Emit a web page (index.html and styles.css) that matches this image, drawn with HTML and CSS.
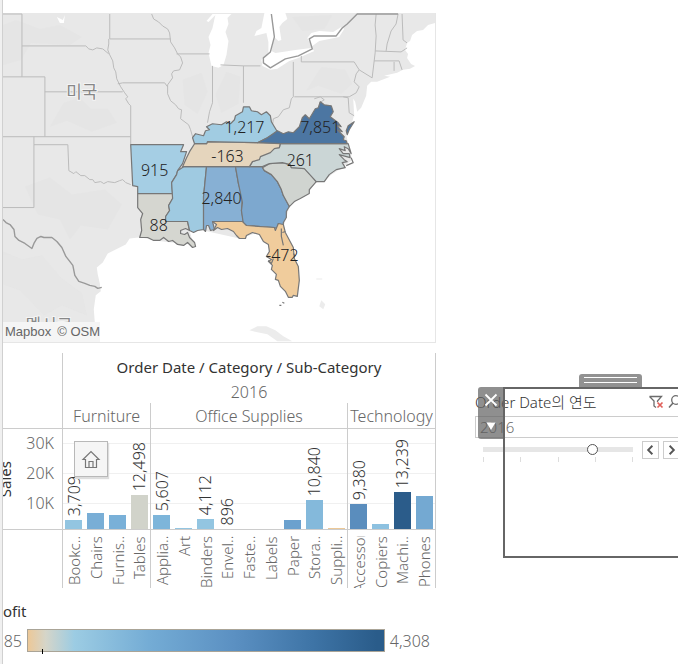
FILE: index.html
```html
<!DOCTYPE html>
<html lang="ko">
<head>
<meta charset="utf-8">
<title>Order Date / Category / Sub-Category</title>
<meta name="viewport" content="width=device-width, initial-scale=1">
<link rel="stylesheet" href="styles.css">
</head>
<body>
<div class="dashboard">
<main class="sheets">
  <figure class="map">
    <svg class="map-canvas" viewBox="3 13 433 330" preserveAspectRatio="xMinYMin slice" role="img" aria-label="Profit">
      <rect class="water" x="3" y="13" width="433" height="330"/>
      <path class="land" d="M3 13H436V23L429 25L424 30L418 31L413 35L411 41L408 43L406 50L409 54L408 58L412 64L416 66L411 69L404 70L398 73L385 76L391 77L378 82L372 82L368 86L367 96L362 108L358 112L356 102L354 99L355 115L352 126L347 135L349 144L352 153L352 161L343 168L332 175L325 182L317 182L310 192L295 203L290 207L285 225L240 239L204 231L190 231L193 242L172 243L155 241L142 238L139 238L130 239L126 245L118 249L108 254L103 263L97 268L98 275L100 284L101 292L96 296L94 310L95 323V341H3Z"/>
      <g class="relief">
        <path d="M3 25L16 20L40 29L60 25L82 37L70 45L31 43L21 60L3 65Z"/>
        <path d="M64 103L80 98L91 109L108 109L117 123L92 132L67 121L50 127Z"/>
        <path d="M25 187L50 178L72 195L105 190L122 205L108 230L81 226L70 240L60 220L38 215Z"/>
        <path d="M3 252L22 260L42 256L61 278L82 294L87 316L62 306L44 316L20 291L3 285Z"/>
        <path d="M183 80L202 73L208 92L198 114L185 105Z"/>
        <path d="M227 72L241 77L239 104L222 113L216 95Z"/>
        <path d="M322 67L346 70L353 84L342 94L319 86L307 91Z"/>
        <path d="M293 17L333 15L325 29L303 31Z"/>
      </g>
      <g class="water">
        <path d="M216 14H232L228 18L229 24L226 32L229 41L227 55L224 65L219 68L212 66L209 53L211 45L209 37L213 28Z"/>
        <path d="M207 21L213 14L217 14L209 22Z"/>
        <path d="M265 13H286L288 19L283 23L280 27L282 40L279 41L275 37L272 51L276 53L283 52L296 50L312 48L315 51L299 58L290 61L278 69L271 70L263 66L262 60L269 53L269 42L267 33L259 35L255 36L257 31L262 28Z"/>
        <path d="M308 38L312 33L320 31L334 32L342 27L345 29L340 37L320 41L313 46L310 42Z"/>
        <path d="M57 17L63 20L65 15L64 23L60 23Z"/>
      </g>
      <g class="state-lines">
        <path d="M3 14H22V77M3 77H45V137M22 46H86L89 49L93 50L97 48L103 49L109 54M110 14V39H171M109 39V44L108 50L110 55L113 61L114 68L116 72L117 79L121 87L125 93L128 97L126 99L129 104L131 106V145M118 84L123 83H165L168 87M45 92H123M3 137H131M34 137V145H68L69 171L74 174L76 172L81 176L85 176L90 180L93 180L95 183L101 182L104 184L108 182L115 183L120 181L123 180L126 183L131 185M34 145V208H3M152 14L154 19L159 22L163 26L168 29L170 33L171 42L175 48L178 54L181 57L183 63L180 70L174 71L172 74L173 78L168 85L168 94L171 101L176 105L179 109L182 110L181 119L189 125L191 130L193 137L198 142M177 54H210M213 66V103L210 112L208 123M221 65L244 66H261M244 66V103M294 62V97L292 99L290 108L284 110L279 117L274 119L273 126M302 56V62H355L360 70L357 74L355 82L360 87L357 93L350 97H295M315 99L321 97L325 100L320 103M344 97L349 98L350 113L355 116M360 70L373 78L376 53L377 36L376 25L377 14M376 51L402 52L408 48M375 61H400L403 70M395 62V71M399 14L397 24L392 31L388 44L387 51M403 14L404 40L408 43"/>
      </g>
      <path class="country-line" d="M3 220L6 223L10 225L14 230L15 237L19 241L25 244L32 249L34 244L37 239L41 237L44 238L52 238L57 242L62 248L66 257L73 266L75 276L79 282L85 284L90 286L95 287L98 289L102 288"/>
      <path class="country-line" d="M272 14L275 37L271 52L264 58V63L271 68L286 59L299 56L313 49L310 39L315 36H337L343 28L348 24L358 14H399"/>
      <path class="islands" d="M250 331L258 327L267 327L276 331L284 337L293 342H278L268 335L258 333ZM322 301L326 305L324 310L320 307ZM317 279H323V280H317Z"/>
      <g class="states">
        <path fill="#a5cee4" d="M131 145H184L181 152H187L185 158L183 164L178 171L177 175L172 183L173 194H138V187L133 186Z"/>
        <path fill="#d5d6d0" d="M138 194H173V199L169 206L170 211L166 217V222H188L190 231L186 229L181 231L181 234L185 235L188 233L190 238L195 243L196 247L193 248L188 243L184 246L178 245L173 241L169 242L164 238L160 241L154 241L148 238H140L142 231L141 220L143 214L138 208Z"/>
        <path fill="#9fcae1" d="M184 167H207L204 197L204 230L198 231L194 233L190 231L188 222H166V217L170 211L169 206L173 199L172 183L177 175L178 171Z"/>
        <path fill="#87b0d4" d="M207 167H236L239 184L243 198L242 211L244 222H213L215 230L211 231L209 226L207 226L206 232L204 230V197Z"/>
        <path fill="#7da8cf" d="M236 167H263L265 171L272 175L278 182L282 190L284 196L290 207L287 212L287 218L284 223V226L279 224L278 229L275 228L247 226L244 225L242 211L243 203L239 184Z"/>
        <path fill="#f0cc9c" d="M213 222H243L247 226L275 228L276 231L279 224L284 225L286 233L294 248L295 259L299 267L300 281L298 297L294 296L293 298H289L286 292L281 287L279 281L276 280L277 275L272 270L273 266L269 262L272 260L267 257L270 252L269 245L264 242L260 235L253 233L247 236L246 239H240L237 236L234 232L228 229L222 230L218 228L214 231L217 225Z"/>
        <path fill="#d0d4d0" d="M263 168L270 164L283 163L291 165L292 168H305L317 182L310 190L310 194L301 199L295 202L290 207L284 196L282 190L278 182L272 175L265 171Z"/>
        <path fill="#cbd6d6" d="M281 144H349L352 154L349 149L345 147L346 151L340 149L344 154H350L351 158L340 155L345 160L348 162L343 163L346 168L337 170L330 175L325 182L317 182L305 169L292 168L291 165L283 163L270 164L263 167H250L253 162L260 159L261 156L271 152L275 148H280Z"/>
        <path fill="#e5d5bd" d="M195 144H207L208 142L258 143H281L280 148L275 149L271 153L261 157L260 160L253 162L250 167H183L187 158L190 152Z"/>
        <path fill="#a1cce2" d="M195 144L193 138L196 134L204 136L206 131L210 130L207 127L213 124L222 125L227 122L231 124L235 120L236 116L243 112L244 107L250 107L252 111L258 112L262 115L267 112L271 116L272 122L278 132L268 138L258 143L208 142L207 144Z"/>
        <path fill="#4c76a2" d="M258 143L268 138L278 131L284 134L289 132L294 133L300 127L303 118L306 115L310 119L316 109L319 108L321 102L325 105L332 106L334 112L331 117L339 123L342 127L337 125L343 132L338 130L345 137L344 140L347 141L348 144H281Z"/>
        <path fill="#4c76a2" d="M349 126L355 122L350 130L348 135L347 131Z"/>
        <path class="shore" d="M282 229V237L284 246M283 233L286 232M294 254L296 257M269 261L272 264L274 259M352 158L354 163L347 166M280 306H282M283 303L285 304"/>
      </g>
      <g class="place-names">
        <text x="82" y="98">미국</text>
        <text x="49" y="332">멕시코</text>
      </g>
      <g class="marks">
        <text x="245" y="133">1,217</text>
        <text x="321" y="133">7,851</text>
        <text x="228" y="162">-163</text>
        <text x="301" y="166">261</text>
        <text x="155" y="176">915</text>
        <text x="222" y="204">2,840</text>
        <text x="159" y="232">88</text>
        <text x="283" y="262">-472</text>
      </g>
    </svg>
    <figcaption class="attribution"><span>Mapbox</span><span>© OSM</span></figcaption>
  </figure>

  <section class="chart">
    <div class="axis">
      <div class="axis-head"></div>
      <div class="axis-body">
        <span class="axis-title">Sales</span>
        <div class="axis-ticks"><span>30K</span><span>20K</span><span>10K</span></div>
      </div>
    </div>
    <div class="panes">
      <h2 class="chart-title">Order Date / Category / Sub-Category</h2>
      <div class="year">2016</div>
      <div class="groups">
        <section class="group four">
          <h3>Furniture</h3>
          <div class="plot">
            <div class="column"><span class="value">3,709</span><i class="bar" style="height:9px;background:#93c5e1"></i></div>
            <div class="column"><i class="bar" style="height:16px;background:#79aed6"></i></div>
            <div class="column"><i class="bar" style="height:14px;background:#79b0d8"></i></div>
            <div class="column"><span class="value">12,498</span><i class="bar" style="height:34px;background:#d1d3ca"></i></div>
          </div>
          <div class="labels"><span>Bookc..</span><span>Chairs</span><span>Furnis..</span><span>Tables</span></div>
        </section>
        <section class="group nine">
          <h3>Office Supplies</h3>
          <div class="plot">
            <div class="column"><span class="value">5,607</span><i class="bar" style="height:14px;background:#7db5da"></i></div>
            <div class="column"><i class="bar" style="height:1px;background:#93c5e1"></i></div>
            <div class="column"><span class="value">4,112</span><i class="bar" style="height:10px;background:#93c5e1"></i></div>
            <div class="column"><span class="value">896</span></div>
            <div class="column"></div>
            <div class="column"></div>
            <div class="column"><i class="bar" style="height:9px;background:#6ba1ce"></i></div>
            <div class="column"><span class="value">10,840</span><i class="bar" style="height:29px;background:#84b9db"></i></div>
            <div class="column"><i class="bar" style="height:1px;background:#ecc897"></i></div>
          </div>
          <div class="labels"><span>Applia..</span><span>Art</span><span>Binders</span><span>Envel..</span><span>Faste..</span><span>Labels</span><span>Paper</span><span>Stora..</span><span>Suppli..</span></div>
        </section>
        <section class="group four">
          <h3>Technology</h3>
          <div class="plot">
            <div class="column"><span class="value">9,380</span><i class="bar" style="height:25px;background:#5a8dbd"></i></div>
            <div class="column"><i class="bar" style="height:5px;background:#8dc1e0"></i></div>
            <div class="column"><span class="value">13,239</span><i class="bar" style="height:37px;background:#2b5c8a"></i></div>
            <div class="column"><i class="bar" style="height:33px;background:#74a9d2"></i></div>
          </div>
          <div class="labels"><span class="middle">Accessor</span><span>Copiers</span><span>Machi..</span><span>Phones</span></div>
        </section>
      </div>
    </div>
    <button class="home" type="button" aria-label="Home">
      <svg viewBox="0 0 20 20" width="20" height="20"><path d="M2 10.500L10 2.500L18 10.500H15.500V18.500H4.500V10.500Z"/><path d="M8 18.500V12.500H12V18.500"/></svg>
    </button>
  </section>

  <section class="legend">
    <h2>ofit</h2>
    <div class="legend-row"><span class="low">185</span><div class="ramp"></div><span class="high">4,308</span></div>
  </section>
</main>

<aside class="filter">
  <div class="filter-head">
    <h2 id="year-title">Order Date의 연도</h2>
    <button class="tool" type="button" aria-label="Clear filter"><svg viewBox="0 0 16 16" width="16" height="16"><path d="M1.500 2.500H13.500L9.500 7V8M1.500 2.500L6 7V12L8 13.500" fill="none" stroke="#6b6b6b" stroke-width="1.300"/><path d="M9.500 8.500L14.500 13.500M14.500 8.500L9.500 13.500" stroke="#e0605a" stroke-width="1.700"/></svg></button>
    <button class="tool" type="button" aria-label="Search"><svg viewBox="0 0 16 16" width="16" height="16"><circle cx="8" cy="6" r="4.300" fill="none" stroke="#6b6b6b" stroke-width="1.300"/><path d="M5 9L1 13.500" stroke="#6b6b6b" stroke-width="1.500"/></svg></button>
  </div>
  <input class="year-box" type="text" value="2016" aria-labelledby="year-title">
  <div class="stepper">
    <div class="slider">
      <input type="range" min="0" max="4" value="3" aria-labelledby="year-title">
      <div class="slider-ticks"><i></i><i></i><i></i><i></i><i></i></div>
    </div>
    <button class="step" type="button" aria-label="Previous"><svg viewBox="0 0 16 16" width="16" height="16"><path d="M10 3.500L5.500 8L10 12.500"/></svg></button>
    <button class="step" type="button" aria-label="Next"><svg viewBox="0 0 16 16" width="16" height="16"><path d="M6 3.500L10.500 8L6 12.500"/></svg></button>
  </div>
  <div class="selection"></div>
  <div class="grip"></div>
  <div class="object-tools">
    <button type="button" aria-label="Remove"><svg viewBox="0 0 16 16" width="16" height="16"><path d="M2.500 2.500L13.500 13.500M13.500 2.500L2.500 13.500" stroke="#fff" stroke-width="1.800"/></svg></button>
    <button type="button" aria-label="More options"><svg viewBox="0 0 16 16" width="16" height="16"><path d="M3.500 4.500H12.500L8 12Z" fill="#fff"/></svg></button>
  </div>
</aside>
</div>
</body>
</html>
```
FILE: styles.css
```css
* { box-sizing: border-box; }

body {
  margin: 0;
  overflow: hidden;
  background: #fff;
  color: #666;
  font: 300 16px/20px "Noto Sans", "Noto Sans CJK KR", sans-serif;
}

h2, h3, figure { margin: 0; font: inherit; }
button { padding: 0; font: inherit; }
svg { display: block; }

.dashboard {
  display: grid;
  grid-template-columns: minmax(0, 434fr) minmax(0, 242fr);
  min-height: 100vh;
  border-left: 2px solid #f0f0f0;
}

.sheets {
  overflow: hidden;
  padding-top: 13px;
  border-left: 1px solid #d0d0d0;
}

/* Map */
.map {
  position: relative;
  border: solid #e6e6e6;
  border-width: 0 1px 1px 0;
}
.map-canvas { width: 100%; height: auto; }
.water { fill: #fff; }
.land { fill: #e8e8e8; }
.relief { fill: #e4e4e4; opacity: .5; }
.islands { fill: #ececec; }
.state-lines { fill: none; stroke: #bbb; stroke-width: 1; }
.country-line { fill: none; stroke: #999; stroke-width: 1.4; stroke-linejoin: round; }
.states { stroke: #777; stroke-width: 1.2; stroke-linejoin: round; }
.states .shore { fill: none; }
.marks { fill: #222; font-size: 16px; text-anchor: middle; }
.place-names {
  fill: #888;
  stroke: #f4f4f4;
  stroke-width: 2px;
  paint-order: stroke;
  font: 400 17px "Noto Sans CJK KR", sans-serif;
  text-anchor: middle;
}
.attribution {
  position: absolute;
  left: 0;
  bottom: 0;
  display: flex;
  gap: 6px;
  padding: 0 0 0 2px;
  background: #f5f5f5;
  font: 400 13px/20px "Liberation Sans", sans-serif;
}

/* Bar chart */
.chart {
  position: relative;
  display: grid;
  grid-template-columns: 59px minmax(0, 1fr);
  height: 235px;
  margin-top: 10px;
}
.axis-head { height: 76px; border-bottom: 1px solid #ccc; }
.axis-body {
  display: flex;
  align-items: center;
  justify-content: space-between;
  height: 101px;
  padding-right: 8px;
  border-bottom: 1px solid #ccc;
}
.axis-title {
  margin-left: -8px;
  writing-mode: vertical-rl;
  transform: rotate(180deg);
  color: #333;
  font-size: 15px;
  font-weight: 400;
}
.axis-ticks {
  display: grid;
  gap: 10px;
  align-self: start;
  padding-top: 4px;
}
.panes { border: solid #ccc; border-width: 0 1px; }
.chart-title {
  padding-top: 4px;
  color: #333;
  font-size: 15px;
  font-weight: 400;
  text-align: center;
  white-space: nowrap;
}
.year { padding: 5px 0 1px; text-align: center; }
.groups { display: flex; }
.group { min-width: 0; border-left: 1px solid #ccc; }
.group:first-child { border-left: 0; }
.four { flex: 4 1 0; }
.nine { flex: 9 1 0; }
.group h3 {
  height: 26px;
  padding-top: 3px;
  border-bottom: 1px solid #ccc;
  text-align: center;
}
.plot {
  display: flex;
  height: 101px;
  border-bottom: 1px solid #ccc;
  background: repeating-linear-gradient(#fff 0 29px, #f0f0f0 29px 30px) 0 -15px;
}
.column {
  display: flex;
  flex: 1 1 0;
  flex-direction: column;
  align-items: center;
  justify-content: flex-end;
  min-width: 0;
}
.bar { width: 78%; }
.value {
  padding-top: 4px;
  writing-mode: vertical-rl;
  transform: rotate(180deg);
  color: #333;
}
.labels {
  display: flex;
  height: 58px;
  padding-top: 6px;
  overflow: hidden;
  font-size: 15px;
}
.labels span {
  display: flex;
  flex: 1 1 0;
  align-items: center;
  justify-content: flex-end;
  min-width: 0;
  overflow: hidden;
  writing-mode: vertical-rl;
  transform: rotate(180deg);
  white-space: nowrap;
}
.labels .middle { justify-content: center; }
.home {
  position: absolute;
  top: 88px;
  left: 71px;
  display: grid;
  place-items: center;
  width: 34px;
  height: 36px;
  border: 1px solid #b8b8b8;
  background: #f5f5f5;
  box-shadow: 1px 2px 1px #ddd;
}
.home svg { fill: none; stroke: #777; stroke-width: 1.2; }

/* Colour legend */
.legend { margin-top: 13px; }
.legend h2 { color: #333; font-size: 15px; font-weight: 400; }
.legend-row { display: flex; align-items: center; gap: 5px; margin-top: 8px; }
.low { display: flex; justify-content: flex-end; flex: 0 0 19px; min-width: 0; }
.ramp {
  position: relative;
  flex: 1 1 0;
  height: 23px;
  border: 1px solid #aaa497;
  background: linear-gradient(90deg, #ecc898, #d5d5c9 5%, #9ccce3 13%, #74acd5 34%, #5b90c2 58%, #3e74a6 80%, #2a5c8a 98%);
}
.ramp::after {
  content: "";
  position: absolute;
  top: 19px;
  left: 4%;
  width: 1px;
  height: 5px;
  background: #000;
}
.high { margin-right: 6px; }

/* Year filter, shown selected */
.filter {
  position: relative;
  align-self: start;
  width: 220px;
  height: 171px;
  margin: 387px 0 0 39px;
  font-size: 15px;
}
.filter-head { display: flex; align-items: center; height: 29px; }
.filter-head h2 { flex: 1 1 0; color: #333; }
.tool { width: 16px; height: 20px; margin-right: 4px; border: 0; background: none; }
.filter-head .tool:last-child { margin-right: 11px; }
.year-box {
  display: block;
  width: 100%;
  height: 22px;
  padding: 0 4px;
  border: 1px solid #ccc;
  background: #fff;
  color: #666;
  font: inherit;
}
.stepper { display: flex; gap: 4px; padding: 3px 8px 0; }
.slider { flex: 0 0 150px; margin-right: 5px; }
.slider input {
  display: block;
  width: 100%;
  height: 16px;
  margin: 0;
  appearance: none;
  background: linear-gradient(#e6e6e6, #e6e6e6) center / 100% 5px no-repeat;
}
.slider input::-webkit-slider-thumb {
  appearance: none;
  width: 11px;
  height: 11px;
  border: 1px solid #555;
  border-radius: 50%;
  background: #fff;
}
.slider-ticks { display: flex; justify-content: space-between; }
.slider-ticks i { width: 1px; height: 5px; background: #ddd; }
.step { width: 17px; height: 18px; border: 1px solid #ccc; background: #fff; }
.step svg { width: 15px; fill: none; stroke: #555; stroke-width: 2; }
.selection {
  position: absolute;
  inset: 0 0 0 28px;
  border: 2px solid #666;
}
.grip {
  position: absolute;
  top: -13px;
  left: 104px;
  width: 63px;
  height: 13px;
  border-radius: 3px 3px 0 0;
  background: linear-gradient(#fff, #fff) 5px 3px / 53px 1px no-repeat, linear-gradient(#fff, #fff) 5px 8px / 53px 1px no-repeat, #929292;
}
.object-tools {
  position: absolute;
  top: 0;
  left: 3px;
  display: grid;
  grid-template-rows: 1fr 1fr;
  width: 25px;
  height: 52px;
  border-radius: 3px 0 0 3px;
  background: rgb(96 96 96 / 70%);
}
.object-tools button { display: grid; place-items: center; border: 0; background: none; }
```
